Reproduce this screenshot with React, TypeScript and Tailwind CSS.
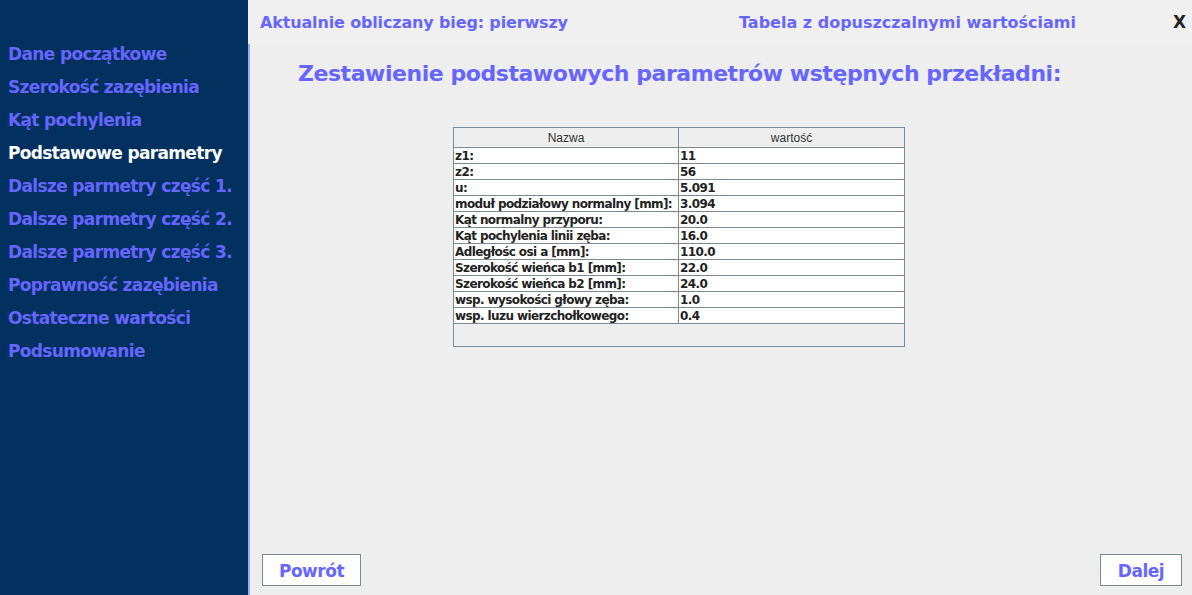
import React from "react";

const nav = [
  "Dane początkowe",
  "Szerokość zazębienia",
  "Kąt pochylenia",
  "Podstawowe parametry",
  "Dalsze parmetry część 1.",
  "Dalsze parmetry część 2.",
  "Dalsze parmetry część 3.",
  "Poprawność zazębienia",
  "Ostateczne wartości",
  "Podsumowanie",
];

const rows: [string, string][] = [
  ["z1:", "11"],
  ["z2:", "56"],
  ["u:", "5.091"],
  ["moduł podziałowy normalny [mm]:", "3.094"],
  ["Kąt normalny przyporu:", "20.0"],
  ["Kąt pochylenia linii zęba:", "16.0"],
  ["Adległośc osi a [mm]:", "110.0"],
  ["Szerokość wieńca b1 [mm]:", "22.0"],
  ["Szerokość wieńca b2 [mm]:", "24.0"],
  ["wsp. wysokości głowy zęba:", "1.0"],
  ["wsp. luzu wierzchołkowego:", "0.4"],
];

const font = { fontFamily: '"DejaVu Sans", Verdana, sans-serif' };
const arial = { fontFamily: '"Liberation Sans", Arial, sans-serif' };

export default function App() {
  return (
    <div
      className="w-[1192px] h-[595px] flex bg-[#eeeeee] overflow-hidden"
      style={font}
    >
      <div className="w-[248px] shrink-0 bg-[#02305f] pt-[38px] pl-[8px]">
        {nav.map((n, i) => (
          <div
            key={n}
            className={`h-[33px] leading-[33px] text-[17px] font-bold tracking-[-0.65px] whitespace-nowrap ${
              i === 3 ? "text-white" : "text-[#6666ff]"
            }`}
          >
            {n}
          </div>
        ))}
      </div>
      <div className="flex-1 flex flex-col">
        <div className="h-[44px] flex items-center bg-[#f0f0f0] shrink-0 pt-[2px]">
          <div className="pl-[12px] w-[491px] text-[16px] font-bold text-[#6666ff] tracking-[-0.15px] whitespace-nowrap">
            Aktualnie obliczany bieg: pierwszy
          </div>
          <div className="flex-1 text-[16px] font-bold text-[#6666ff] tracking-[0px] whitespace-nowrap">
            Tabela z dopuszczalnymi wartościami
          </div>
          <div className="pr-[6px] text-[17px] font-bold text-[#222222]">X</div>
        </div>
        <div className="flex-1 flex flex-col border-l-2 border-[#8fb0e8]">
          <div className="pl-[48px] pt-[14px] text-[22px] font-bold text-[#6666ff] tracking-[-0.45px] leading-[32px] whitespace-nowrap">
            Zestawienie podstawowych parametrów wstępnych przekładni:
          </div>
          <div className="pl-[203px] pt-[37px]">
            <div className="w-[452px] h-[220px] border border-[#7a8a99] bg-[#eeeeee] text-[12px]">
              <div className="flex h-[20px] border-b border-[#7a8a99]">
                <div className="w-[225px] border-r border-[#7a8a99] flex items-center justify-center text-[#333333]" style={arial}>
                  Nazwa
                </div>
                <div className="flex-1 flex items-center justify-center text-[#333333]" style={arial}>
                  wartość
                </div>
              </div>
              {rows.map(([a, b]) => (
                <div key={a} className="flex h-[16px] border-b border-[#7a8a99] bg-white font-bold text-[#222222] leading-[16px] tracking-[-0.6px]">
                  <div className="w-[225px] border-r border-[#7a8a99] pl-[1px] whitespace-nowrap overflow-hidden">
                    {a}
                  </div>
                  <div className="flex-1 pl-[1px]">{b}</div>
                </div>
              ))}
            </div>
          </div>
          <div className="flex-1" />
          <div className="flex justify-between pl-[12px] pr-[10px] pb-[9px]">
            <button className="w-[99px] h-[32px] pt-[3px] bg-white border border-[#7a8a99] text-[17px] font-bold text-[#6666ff] tracking-[-0.5px]">
              Powrót
            </button>
            <button className="w-[82px] h-[32px] pt-[3px] bg-white border border-[#7a8a99] text-[17px] font-bold text-[#6666ff] tracking-[-0.5px]">
              Dalej
            </button>
          </div>
        </div>
      </div>
    </div>
  );
}
